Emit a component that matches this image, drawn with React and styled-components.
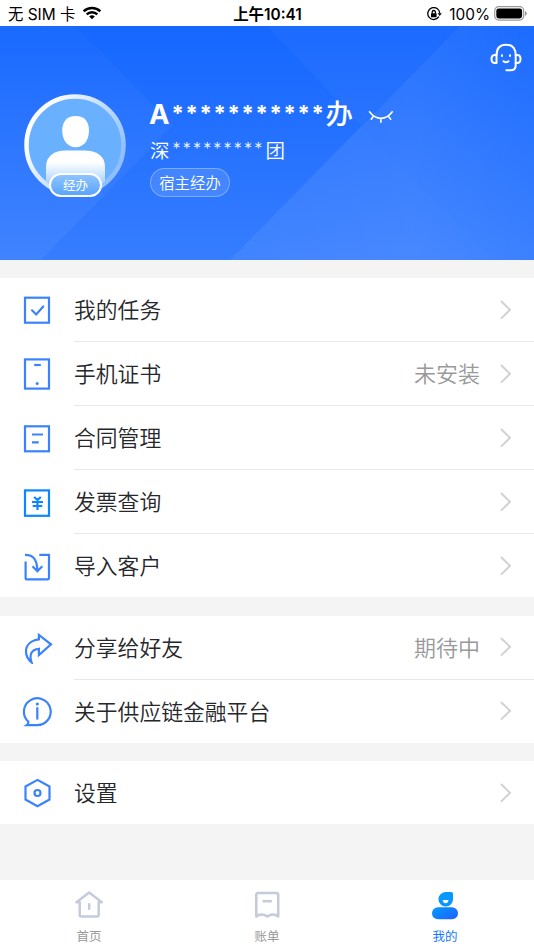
import React from "react";
import styled, { createGlobalStyle } from "styled-components";

const menuGroups = [
  [
    { icon: "task", label: "我的任务" },
    { icon: "phone", label: "手机证书", value: "未安装" },
    { icon: "contract", label: "合同管理" },
    { icon: "invoice", label: "发票查询" },
    { icon: "import", label: "导入客户" },
  ],
  [
    { icon: "share", label: "分享给好友", value: "期待中" },
    { icon: "about", label: "关于供应链金融平台" },
  ],
  [{ icon: "setting", label: "设置" }],
];

const menuIcons = {
  task: (
    <>
      <rect x="3" y="3.7" width="24" height="25" />
      <path d="M10 16.3l4.2 4.2 7-8" strokeLinecap="round" />
    </>
  ),
  phone: (
    <>
      <rect x="3" y="1.4" width="24" height="29.2" />
      <path d="M12.2 7h6.6" />
      <circle cx="15.2" cy="25.4" r="1.5" fill="currentColor" stroke="none" />
    </>
  ),
  contract: (
    <>
      <rect x="3" y="4.3" width="24" height="25" />
      <path d="M10 12.5h11M10 20.3h6.7" />
    </>
  ),
  invoice: (
    <>
      <rect x="3" y="4.4" width="24" height="25.4" />
      <path d="M12.2 10.8q3.3 4.6 6.6 0M10 16h11M10.7 20h9.6M15.5 13.7V24" />
    </>
  ),
  import: (
    <>
      <path d="M3.6 11.5V28.4q0 .9.9.9H26q1 0 1-1V4.9H17.3" />
      <path d="M3 4.9c8.2-.1 12.4 4.6 12.3 16M10.5 16.3l4.9 4.9 4.9-4.9" />
    </>
  ),
  share: (
    <path d="M16.9 3v4.4C9.2 8.5 4 12.8 4 19.500c0 4.700 2 8 5.500 10.800-2.700-7.800.3-13 7.400-13.500v6.200L29 12.400z" />
  ),
  about: (
    <>
      <path d="M6.400 26.700A13.400 13.400 0 1 1 15.300 30.100H4.700q1.700-1.200 1.700-3.400z" />
      <path d="M15.3 13.2v10.500" strokeLinecap="round" />
      <circle cx="15.3" cy="9" r="1.6" fill="currentColor" stroke="none" />
    </>
  ),
  setting: (
    <>
      <path d="M15.5 2.9l12 6.600v13l-12 6.700-12-6.700v-13z" />
      <circle cx="15.5" cy="16" r="3" />
    </>
  ),
};

function StatusBar() {
  return (
    <Status>
      <div className="carrier">
        无 SIM 卡
        <svg width="20" height="14" viewBox="0 0 20 14" fill="none" stroke="#000">
          <path d="M1.7 5.3a11.8 11.8 0 0 1 16.600 0" strokeWidth="2.5" />
          <path d="M4.7 8.4a7.5 7.5 0 0 1 10.600 0" strokeWidth="2.4" />
          <path d="M10 13.2L7.2 10.500a4 4 0 0 1 5.600 0z" fill="#000" stroke="none" />
        </svg>
      </div>
      <div className="time">上午10:41</div>
      <div className="battery">
        <svg width="15" height="14" viewBox="0 0 15 14" fill="none" stroke="#000" strokeWidth="1.3">
          <path d="M11.9 9.7A6 6 0 1 1 12.800 6.300" />
          <path d="M10.6 6.2h4.200l-2.100 2.800z" fill="#000" stroke="none" />
          <rect x="4" y="6.2" width="5.6" height="4" rx=".5" fill="#000" stroke="none" />
          <path d="M5.2 6.5V5.100a1.600 1.600 0 0 1 3.200 0v1.400" />
        </svg>
        <span>100%</span>
        <svg width="33" height="15" viewBox="0 0 33 15">
          <rect x=".7" y=".7" width="29" height="13.4" rx="4" fill="none" stroke="#999" strokeWidth="1.2" />
          <rect x="2.3" y="2.4" width="25.8" height="10" rx="2.3" />
          <path d="M31 5v5q1.8-.8 1.8-2.500T31 5z" fill="#999" />
        </svg>
      </div>
    </Status>
  );
}

function HeaderPattern() {
  return (
    <Pattern viewBox="0 0 534 234" preserveAspectRatio="none">
      <defs>
        <linearGradient id="base" x1="0" y1="0" x2="0" y2="1">
          <stop offset="0" stopColor="#1567ff" />
          <stop offset="1" stopColor="#367dff" />
        </linearGradient>
        <linearGradient id="left" x1="0" y1="0" x2="0" y2="1">
          <stop offset="0" stopColor="#fff" stopOpacity=".02" />
          <stop offset="1" stopColor="#fff" stopOpacity=".05" />
        </linearGradient>
        <linearGradient id="right" x1="230" y1="0" x2="534" y2="0" gradientUnits="userSpaceOnUse">
          <stop offset="0" stopColor="#fff" stopOpacity=".05" />
          <stop offset=".6" stopColor="#fff" stopOpacity=".08" />
          <stop offset="1" stopColor="#fff" stopOpacity=".03" />
        </linearGradient>
      </defs>
      <rect width="534" height="234" fill="url(#base)" />
      <path d="M0 0H75L173 99 41 234H0z" fill="url(#left)" />
      <path d="M460 0H534V234H230z" fill="url(#right)" />
      <path d="M267 0H460L361 99z" fill="#fff" fillOpacity=".03" />
      <path d="M361 99L495 234H230z" fill="#fff" fillOpacity=".01" />
    </Pattern>
  );
}

function Avatar() {
  return (
    <AvatarBox>
      <svg width="102" height="102" viewBox="0 0 102 102">
        <defs>
          <linearGradient id="ring" x1="0" y1="0" x2="1" y2=".6">
            <stop offset=".2" stopColor="#fff" />
            <stop offset="1" stopColor="#8fbfff" />
          </linearGradient>
          <linearGradient id="body" x1="0" y1="0" x2="0" y2="1">
            <stop offset=".3" stopColor="#fff" />
            <stop offset="1" stopColor="#8bc3ff" />
          </linearGradient>
          <clipPath id="face">
            <circle cx="51" cy="51" r="47" />
          </clipPath>
        </defs>
        <circle cx="51" cy="51" r="48.5" fill="#69b1ff" stroke="url(#ring)" strokeWidth="4.5" />
        <g clipPath="url(#face)">
          <path d="M22 96V73c0-11 8-16.500 20-16.500h18c13 0 21 5.500 21 16.500v23z" fill="url(#body)" />
        </g>
        <path d="M51.700 22c9 0 13.300 6 13.300 14.500 0 10-5.500 16.800-13.300 16.800S38.200 46.500 38.200 36.500C38.200 28 42.700 22 51.700 22z" fill="#fff" />
      </svg>
      <span className="badge">经办</span>
    </AvatarBox>
  );
}

function MenuRow({ icon, label, value }) {
  return (
    <Row>
      <MenuIcon viewBox="0 0 32 32" $bright={icon === "invoice"}>
        {menuIcons[icon]}
      </MenuIcon>
      <div className="content">
        <div className="label">{label}</div>
        {value && <div className="value">{value}</div>}
        <svg width="12" height="20" viewBox="0 0 12 20" fill="none" stroke="#d2d2d2" strokeWidth="2">
          <path d="M1.5 1.5l8.500 8.300-8.500 8.300" strokeLinecap="round" />
        </svg>
      </div>
    </Row>
  );
}

function TabBar() {
  return (
    <Tabs>
      <Tab>
        <svg width="30" height="30" viewBox="0 0 30 30" fill="none" stroke="#c5cbdb" strokeWidth="2.5" strokeLinejoin="round" strokeLinecap="round">
          <path d="M5.7 12.2H2.400L15.200 2.500l12.600 9.700h-3.100v12.600q0 1.700-1.700 1.700H7.400q-1.700 0-1.700-1.700z" />
          <path d="M15.2 13.2v6.600" strokeLinecap="butt" />
        </svg>
        首页
      </Tab>
      <Tab>
        <svg width="30" height="30" viewBox="0 0 30 30" fill="none" stroke="#c5cbdb" strokeWidth="2.6" strokeLinejoin="round">
          <path d="M4.3 26.5V4.800q0-1.800 1.800-1.800h18.300q1.800 0 1.800 1.800v21.700c-3.800-2.900-6.600-2.900-10.900 0-4.300-2.900-7.200-2.900-11 0z" />
          <path d="M10.5 11.2h9.300" />
        </svg>
        账单
      </Tab>
      <Tab $active>
        <svg width="30" height="30" viewBox="0 0 30 30">
          <defs>
            <linearGradient id="me" x1="0" y1="0" x2="1" y2=".7">
              <stop offset="0" stopColor="#009cff" />
              <stop offset="1" stopColor="#1f66ff" />
            </linearGradient>
          </defs>
          <path d="M15.2 2h6q1.800 0 1.800 1.800v5.500a7.300 7.300 0 1 1-7.800-7.300z" fill="#0797ff" />
          <path d="M12.7 10h5.800q-.4 3.300-2.900 3.300T12.700 10z" fill="#fff" />
          <rect x="2" y="17.2" width="26" height="12" rx="6" fill="url(#me)" />
        </svg>
        我的
      </Tab>
    </Tabs>
  );
}

export default function App() {
  return (
    <Page>
      <GlobalStyle />
      <StatusBar />
      <Header>
        <HeaderPattern />
        <Service viewBox="0 0 32 30">
          <path d="M6.5 19.5V12.500C6.500 5.500 10 1.700 16 1.700s9.700 3.800 9.700 10.800V22c0 3.500-2 5.300-5 5.300h-4.400" />
          <path d="M6.500 12H5c-2 0-3.500 1.300-3.500 4s1.500 4 3.500 4h1.500M25.700 12h1.500c2 0 3.300 1.300 3.300 4s-1.300 4-3.300 4h-1.500M13.500 18.300q2.500 1.900 5 0" />
          <path d="M12 12.2v.8M20 12.2v.8" />
        </Service>
        <Profile>
          <Avatar />
          <div className="info">
            <Name>
              <span>
                A<i>***********</i>
                <b>办</b>
              </span>
              <svg width="26" height="14" viewBox="0 0 26 14" fill="none" stroke="#fff" strokeWidth="1.6" strokeLinecap="round">
                <path d="M1.5 1.8C8 10.500 18 10.500 24.300 1.800M5 6.800L3.300 9.200M12.900 8.700v3.500M20.700 6.800l2 2.400" />
              </svg>
            </Name>
            <Company>
              深<i>*********</i>团
            </Company>
            <Role>宿主经办</Role>
          </div>
        </Profile>
      </Header>
      {menuGroups.map((group, i) => (
        <Group key={i}>
          {group.map((item) => (
            <MenuRow key={item.icon} {...item} />
          ))}
        </Group>
      ))}
      <TabBar />
    </Page>
  );
}

const GlobalStyle = createGlobalStyle`
  * {
    box-sizing: border-box;
  }

  body {
    margin: 0;
    font-family: Inter, "Noto Sans CJK SC", sans-serif;
  }

  svg {
    display: block;
    flex-shrink: 0;
  }
`;

const Page = styled.div`
  width: 534px;
  height: 950px;
  display: flex;
  flex-direction: column;
  background: #f4f4f4;
  overflow: hidden;
`;

const Status = styled.div`
  height: 26px;
  padding: 3px 7px 0 8px;
  display: grid;
  grid-template-columns: 1fr auto 1fr;
  align-items: center;
  background: #fff;
  color: #000;
  font-size: 15.4px;
  line-height: 23px;

  .carrier,
  .battery {
    display: flex;
    align-items: center;
  }

  .carrier svg {
    margin: -3px 0 0 7px;
  }

  .time {
    font-weight: 600;
  }

  .battery {
    justify-content: flex-end;
  }

  .battery svg {
    margin-top: -2px;
  }

  .battery span {
    margin: 0 4px 0 7px;
  }
`;

const Header = styled.header`
  height: 234px;
  position: relative;
  padding: 68px 0 0 24px;
`;

const Pattern = styled.svg`
  position: absolute;
  inset: 0;
  width: 100%;
  height: 100%;
`;

const Service = styled.svg`
  position: absolute;
  top: 17px;
  right: 12px;
  width: 32px;
  height: 30px;
  fill: none;
  stroke: #fff;
  stroke-width: 2;
  stroke-linecap: round;
`;

const Profile = styled.div`
  position: relative;
  display: flex;
  color: #fff;

  .info {
    margin-left: 24px;
  }

  i {
    font-style: normal;
    line-height: 1;
  }
`;

const AvatarBox = styled.div`
  position: relative;
  width: 102px;
  height: 102px;

  .badge {
    position: absolute;
    left: 25px;
    top: 79px;
    width: 53px;
    height: 24px;
    border: 2px solid #fff;
    border-radius: 12px;
    background: linear-gradient(#8ec4ff, #5aa5fb);
    font-size: 12.5px;
    line-height: 21px;
    text-align: center;
  }
`;

const Name = styled.div`
  height: 38px;
  padding-top: 2px;
  margin-left: -1px;
  display: flex;
  align-items: center;
  font-size: 27.5px;
  line-height: 36px;
  font-weight: 700;

  i {
    margin-left: 2px;
    font-size: 22px;
    letter-spacing: 1.7px;
    vertical-align: 3px;
  }

  b {
    font-weight: 500;
  }

  svg {
    margin: 6px 0 0 15px;
  }
`;

const Company = styled.div`
  height: 36px;
  padding-top: 2px;
  font-size: 19.5px;
  line-height: 34px;
  font-weight: 350;

  i {
    margin: 0 1px 0 3px;
    font-size: 16px;
    letter-spacing: 2.2px;
    vertical-align: 4px;
  }
`;

const Role = styled.div`
  width: 80px;
  height: 29px;
  border: 1px solid rgba(255, 255, 255, 0.3);
  border-radius: 15px;
  background: rgba(255, 255, 255, 0.12);
  font-size: 15.4px;
  font-weight: 350;
  line-height: 29px;
  text-align: center;
`;

const Group = styled.section`
  margin-top: 18.4px;
  background: #fff;
`;

const Row = styled.div`
  height: 64px;
  padding-left: 22px;
  display: flex;
  align-items: center;

  &:last-child {
    height: 63px;
  }

  .content {
    flex: 1;
    height: 100%;
    margin-left: 20px;
    padding-right: 22px;
    border-bottom: 1px solid #e8e8e8;
    display: flex;
    align-items: center;
  }

  &:last-child .content {
    border-bottom: 0;
  }

  .label,
  .value {
    padding-top: 1px;
    line-height: 32px;
    font-weight: 350;
  }

  .label {
    flex: 1;
    color: #26272b;
    font-size: 21.8px;
  }

  .value {
    margin-right: 20px;
    color: #999;
    font-size: 22px;
  }
`;

const MenuIcon = styled.svg`
  width: 32px;
  height: 32px;
  color: ${({ $bright }) => ($bright ? "#0d87ff" : "#3b83fc")};
  fill: none;
  stroke: currentColor;
  stroke-width: 2.2;
`;

const Tabs = styled.nav`
  height: 70px;
  margin-top: auto;
  display: flex;
  background: #fff;
`;

const Tab = styled.div`
  flex: 1;
  padding-top: 10px;
  display: flex;
  flex-direction: column;
  align-items: center;
  color: ${({ $active }) => ($active ? "#1677ff" : "#999")};
  font-size: 12.5px;
  line-height: 18px;

  svg {
    margin-bottom: 8px;
  }
`;
